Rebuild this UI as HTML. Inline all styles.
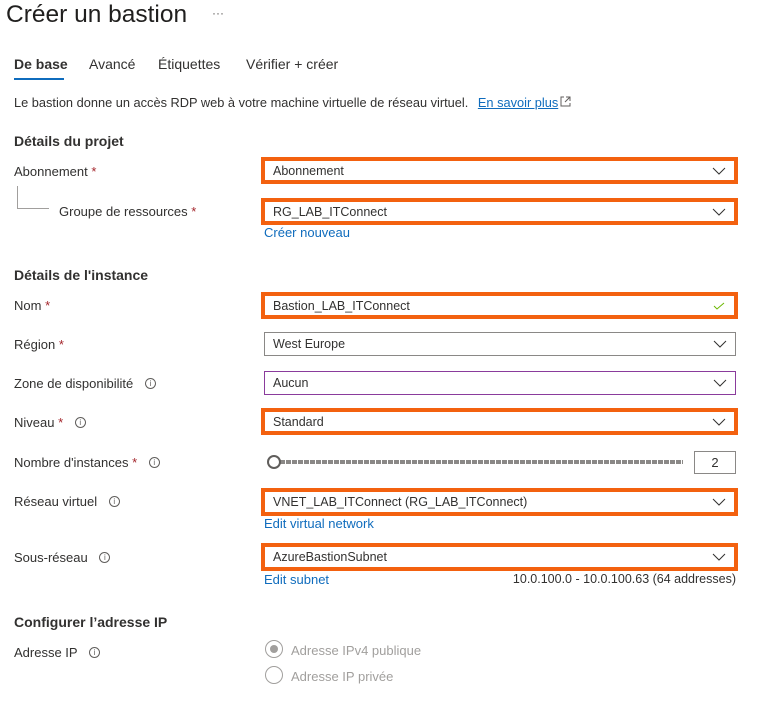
<!DOCTYPE html>
<html><head><meta charset="utf-8"><style>
*{box-sizing:border-box;margin:0;padding:0}
body{width:758px;height:703px;background:#fff;font-family:"Liberation Sans",sans-serif;color:#323130;font-size:13px;position:relative;overflow:hidden}
.a{position:absolute;white-space:nowrap}
.lbl{position:absolute;left:14px;white-space:nowrap;line-height:16px}
.req{color:#a4262c}
.info{display:inline-block;width:11px;height:11px;border:1px solid #605e5c;border-radius:50%;font-size:8px;line-height:9px;text-align:center;color:#605e5c;vertical-align:middle;margin-left:8px;position:relative;top:-1px}
.f{position:absolute;left:264px;width:472px;height:24px;border:1px solid #8a8886;line-height:23px;padding-left:8px;font-size:12.5px}
.o{position:absolute;left:261px;width:477px;border:4px solid #f3610f;background:#fff;line-height:20px;padding-left:8px;font-size:12.5px}
.chev{position:absolute;right:8px;top:50%;margin-top:-4px;width:14px;height:8px}
.link{color:#0f6cbd}
h3{font-size:14px;font-weight:bold}
</style></head><body>
<div class="a" style="left:6px;top:1px;font-size:24.5px;color:#201f1e">Créer un bastion</div>
<div class="a" style="left:212px;top:6px;color:#605e5c;font-size:12px">···</div>
<div class="a" style="left:14px;top:56px;font-size:14px;font-weight:bold">De base</div>
<div class="a" style="left:14px;top:78px;width:50px;height:2px;background:#0f6cbd"></div>
<div class="a" style="left:89px;top:56px;font-size:14px">Avancé</div>
<div class="a" style="left:158px;top:56px;font-size:14px">Étiquettes</div>
<div class="a" style="left:246px;top:56px;font-size:14px">Vérifier + créer</div>
<div class="a" style="left:14px;top:95px;font-size:12.8px">Le bastion donne un accès RDP web à votre machine virtuelle de réseau virtuel. <span class="link" style="text-decoration:underline;margin-left:6px">En savoir plus</span><svg width="11" height="11" viewBox="0 0 11 11" style="margin-left:2px"><path d="M4 1H1v9h9V7M6 1h4v4M10 1L5 6" stroke="#605e5c" fill="none"/></svg></div>
<h3 class="a" style="left:14px;top:133px">Détails du projet</h3>
<div class="lbl" style="top:164px">Abonnement <span class="req">*</span></div>
<div class="a" style="left:17px;top:186px;width:1px;height:22px;background:#a19f9d"></div>
<div class="a" style="left:17px;top:208px;width:32px;height:1px;background:#a19f9d"></div>
<div class="a" style="left:59px;top:204px">Groupe de ressources <span class="req">*</span></div>
<div class="o" style="top:157px;height:27px">Abonnement<svg class="chev" viewBox="0 0 14 8"><path d="M1 1l6 6 6-6" stroke="#323130" fill="none"/></svg></div>
<div class="o" style="top:198px;height:27px">RG_LAB_ITConnect<svg class="chev" viewBox="0 0 14 8"><path d="M1 1l6 6 6-6" stroke="#323130" fill="none"/></svg></div>
<div class="a link" style="left:264px;top:225px">Créer nouveau</div>
<h3 class="a" style="left:14px;top:267px">Détails de l'instance</h3>
<div class="lbl" style="top:298px">Nom <span class="req">*</span></div>
<div class="o" style="top:292px;height:27px">Bastion_LAB_ITConnect<svg class="chev" viewBox="0 0 14 8"><path d="M2 4l3 3 7-6" stroke="#6bb700" fill="none"/></svg></div>
<div class="lbl" style="top:337px">Région <span class="req">*</span></div>
<div class="f" style="top:332px">West Europe<svg class="chev" viewBox="0 0 14 8"><path d="M1 1l6 6 6-6" stroke="#323130" fill="none"/></svg></div>
<div class="lbl" style="top:376px">Zone de disponibilité <span class="info">i</span></div>
<div class="f" style="top:371px;border-color:#8a3b9c">Aucun<svg class="chev" viewBox="0 0 14 8"><path d="M1 1l6 6 6-6" stroke="#323130" fill="none"/></svg></div>
<div class="lbl" style="top:415px">Niveau <span class="req">*</span> <span class="info">i</span></div>
<div class="o" style="top:408px;height:27px">Standard<svg class="chev" viewBox="0 0 14 8"><path d="M1 1l6 6 6-6" stroke="#323130" fill="none"/></svg></div>
<div class="lbl" style="top:455px">Nombre d'instances <span class="req">*</span> <span class="info">i</span></div>
<div class="a" style="left:280px;top:460px;width:403px;height:4px;background:repeating-linear-gradient(90deg,#8a8886 0 5px,#fff 5px 6px)"></div>
<div class="a" style="left:267px;top:455px;width:14px;height:14px;border:2px solid #605e5c;border-radius:50%;background:#fff"></div>
<div class="a" style="left:694px;top:451px;width:42px;height:23px;border:1px solid #8a8886;text-align:center;line-height:21px">2</div>
<div class="lbl" style="top:494px">Réseau virtuel <span class="info">i</span></div>
<div class="o" style="top:488px;height:28px">VNET_LAB_ITConnect (RG_LAB_ITConnect)<svg class="chev" viewBox="0 0 14 8"><path d="M1 1l6 6 6-6" stroke="#323130" fill="none"/></svg></div>
<div class="a link" style="left:264px;top:516px">Edit virtual network</div>
<div class="lbl" style="top:550px">Sous-réseau <span class="info">i</span></div>
<div class="o" style="top:543px;height:28px">AzureBastionSubnet<svg class="chev" viewBox="0 0 14 8"><path d="M1 1l6 6 6-6" stroke="#323130" fill="none"/></svg></div>
<div class="a link" style="left:264px;top:572px">Edit subnet</div>
<div class="a" style="right:22px;top:572px;font-size:12.5px">10.0.100.0 - 10.0.100.63 (64 addresses)</div>
<h3 class="a" style="left:14px;top:614px">Configurer l’adresse IP</h3>
<div class="lbl" style="top:645px">Adresse IP <span class="info">i</span></div>
<div class="a" style="left:265px;top:640px;width:18px;height:18px;border:1px solid #a19f9d;border-radius:50%"><div style="margin:4px;width:8px;height:8px;border-radius:50%;background:#a19f9d"></div></div>
<div class="a" style="left:291px;top:643px;color:#a19f9d">Adresse IPv4 publique</div>
<div class="a" style="left:265px;top:666px;width:18px;height:18px;border:1px solid #a19f9d;border-radius:50%"></div>
<div class="a" style="left:291px;top:669px;color:#a19f9d">Adresse IP privée</div>
</body></html>
